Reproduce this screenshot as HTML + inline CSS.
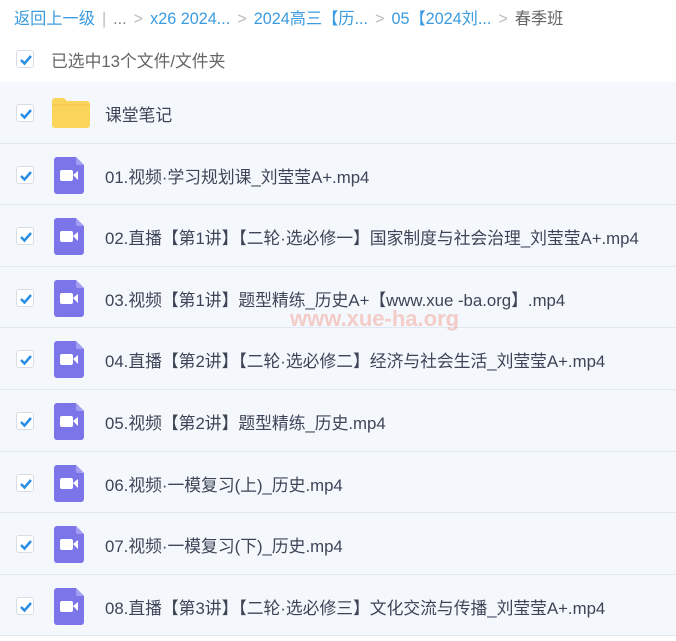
<!DOCTYPE html>
<html><head><meta charset="utf-8"><style>
*{margin:0;padding:0;box-sizing:border-box}
body{width:676px;height:641px;overflow:hidden;background:#fff;font-family:"Liberation Sans","Noto Sans CJK SC",sans-serif;position:relative}
.bc{position:absolute;top:5px;left:14px;font-size:16.2px;color:#3a9be0;white-space:nowrap}
.bc .g{color:#bbb;margin:0 7px}
.bc .d{color:#666}
.sel{position:absolute;top:48px;left:51px;font-size:16.8px;color:#666}
.cb{position:absolute;width:18px;height:18px;border:1px solid #d8dde4;border-radius:3px;background:#fff}
.cb svg{position:absolute;left:1px;top:1px}
.row{position:absolute;left:0;width:676px;background:#f4f8fc;border-bottom:1px solid #dfe8f2}
.row .t{position:absolute;left:105px;top:20px;font-size:16.8px;color:#3d4457;white-space:nowrap}
.row .cb{left:16px;top:22px}
.ic{position:absolute;left:54px;top:13px}
.wm{position:absolute;left:290px;top:306px;font-size:22px;font-weight:bold;color:rgba(240,120,100,.35);font-family:"Liberation Sans",sans-serif}
</style></head><body>
<div class="bc">返回上一级<span class="g">|</span><span style="color:#888">...</span><span class="g">&gt;</span>x26 2024...<span class="g">&gt;</span>2024高三【历...<span class="g">&gt;</span>05【2024刘...<span class="g">&gt;</span><span class="d">春季班</span></div>
<div class="cb" style="left:16px;top:50px"><svg width="16" height="16"><path d="M3 8l3.5 3.5L13 4" stroke="#2b8ee6" stroke-width="2.5" fill="none"/></svg></div>
<div class="sel">已选中13个文件/文件夹</div>
<div class="row" style="top:82px;height:62px"><div class="cb"><svg width="16" height="16"><path d="M3 8l3.5 3.5L13 4" stroke="#2b8ee6" stroke-width="2.5" fill="none"/></svg></div>
<svg class="ic" style="left:52px;top:16px" width="38" height="30"><path d="M0 3a3 3 0 0 1 3-3h9l3 3h20a3 3 0 0 1 3 3v21a3 3 0 0 1-3 3H3a3 3 0 0 1-3-3z" fill="#fbd45c"/><path d="M0 7h38" stroke="#f4c443" stroke-width="1"/></svg>
<div class="t">课堂笔记</div></div>
<div id="rows"></div>
<div class="wm">www.xue-ha.org</div>
<script>
var n=["01.视频·学习规划课_刘莹莹A+.mp4","02.直播【第1讲】【二轮·选必修一】国家制度与社会治理_刘莹莹A+.mp4","03.视频【第1讲】题型精练_历史A+【www.xue -ba.org】.mp4","04.直播【第2讲】【二轮·选必修二】经济与社会生活_刘莹莹A+.mp4","05.视频【第2讲】题型精练_历史.mp4","06.视频·一模复习(上)_历史.mp4","07.视频·一模复习(下)_历史.mp4","08.直播【第3讲】【二轮·选必修三】文化交流与传播_刘莹莹A+.mp4"];
var h="";for(var i=0;i<n.length;i++){var t=Math.round(82+61.6*(i+1)),b=Math.round(82+61.6*(i+2));
h+='<div class="row" style="top:'+t+'px;height:'+(b-t)+'px"><div class="cb"><svg width="16" height="16"><path d="M3 8l3.5 3.5L13 4" stroke="#2b8ee6" stroke-width="2.5" fill="none"/></svg></div><svg class="ic" width="30" height="37"><path d="M3 0h19l8 8v26a3 3 0 0 1-3 3H3a3 3 0 0 1-3-3V3a3 3 0 0 1 3-3z" fill="#7c74e9"/><path d="M22 0v6a2 2 0 0 0 2 2h6z" fill="#a49ef2"/><rect x="6" y="13" width="13" height="11" rx="2" fill="#fff"/><path d="M19 18l5-4v9z" fill="#fff"/></svg><div class="t">'+n[i]+'</div></div>';}
document.getElementById("rows").innerHTML=h;
</script>
</body></html>
